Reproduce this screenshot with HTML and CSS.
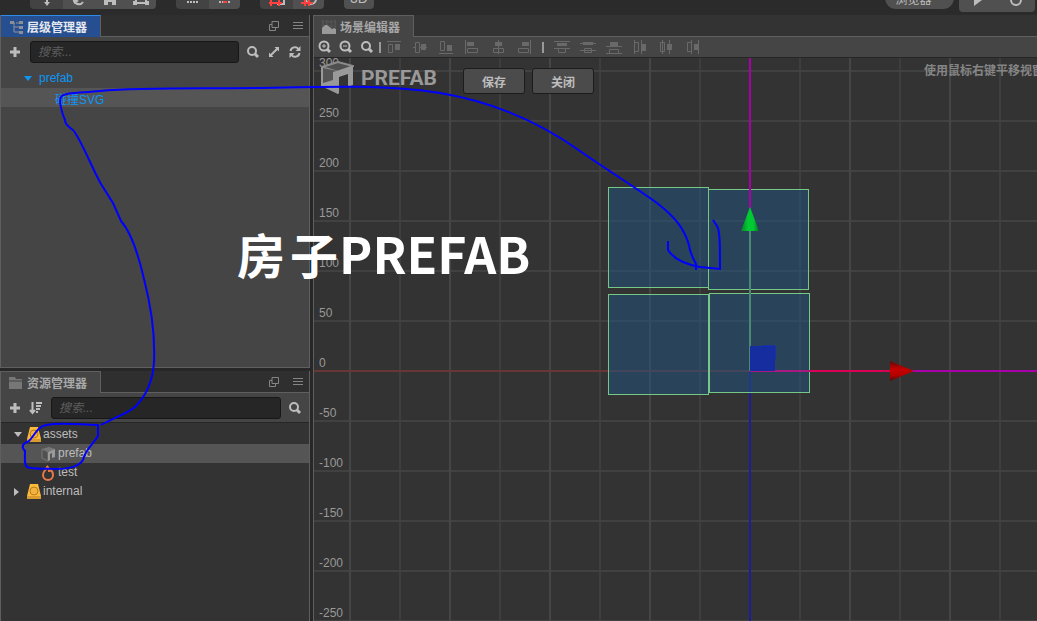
FILE: index.html
```html
<!DOCTYPE html>
<html lang="zh-CN">
<head>
    <meta charset="UTF-8">
    <meta name="viewport" content="width=device-width, initial-scale=1.0">
    <title>房子PREFAB</title>
    <link rel="stylesheet" href="styles.css">
</head>
<body>

<header class="toolbar">
    <div class="group">
        <button class="tool dark" aria-label="移动"><svg width="16" height="16"><path d="M8 2v12" class="ico"/><path d="M5 12h6l-3 4z" class="fill"/></svg></button>
        <button class="tool" aria-label="旋转"><svg width="16" height="16"><path d="M3 8a5 5 0 0 0 9 4M13 8a5 5 0 0 0-9-4" class="ico"/><path d="M3 8v6l5-3z" class="fill"/></svg></button>
        <button class="tool" aria-label="缩放"><svg width="16" height="16"><path d="M4 15V5M12 15V5" class="ico wide"/><path d="M4 11h8" class="ico"/></svg></button>
        <button class="tool" aria-label="矩形"><svg width="18" height="16"><path d="M4 4v8M14 4v8M4 13h10" class="ico"/><path d="M1 11h4v4H1zM13 11h4v4h-4z" class="fill"/></svg></button>
    </div>
    <div class="group">
        <button class="tool dark" aria-label="锚点"><svg width="14" height="16"><path d="M1 12h12" class="ico dash"/></svg></button>
        <button class="tool" aria-label="中心"><svg width="14" height="16"><path d="M1 12h12" class="ico dash"/><path d="M5 12h4" class="ico red"/></svg></button>
    </div>
    <div class="group">
        <button class="tool dark" aria-label="本地"><svg width="18" height="16"><path d="M9 14h7V3" class="ico"/><path d="M3 4v12M11 4v12M1 13h13" class="ico red"/></svg></button>
        <button class="tool" aria-label="世界"><svg width="18" height="16"><circle cx="11" cy="9" r="5" class="ico"/><path d="M5 4v12M9 4v12M1 13h12" class="ico red"/></svg></button>
    </div>
    <button class="tool single">3D</button>
    <div class="preview">
        <button class="tool pill">浏览器<span class="caret">▼</span></button>
        <div class="group play">
            <button class="tool" aria-label="运行"><svg width="16" height="16"><path d="M4 2l8 5-8 6z" class="fill"/></svg></button>
            <button class="tool" aria-label="刷新"><svg width="16" height="16"><circle cx="8" cy="7" r="5" class="ico"/></svg></button>
        </div>
    </div>
</header>

<main class="workspace">
    <aside class="sidebar">
        <section class="panel hierarchy">
            <div class="tabs">
                <h2 class="tab active">
                    <svg width="14" height="16"><path d="M2 4h3M4 4v9h5M4 8h5M6 4h5" fill="none" stroke="#8b8f95"/><path d="M0 2h4v3H0zM9 2h4v3H9zM9 7h4v3H9zM9 12h4v3H9z" fill="#8b8f95"/></svg>
                    层级管理器
                </h2>
                <div class="tab-tools">
                    <button aria-label="弹出"><svg width="12" height="12"><path d="M4 1.5h6.500v6H4zM4 4.500H1.500v6h6v-3" class="thin"/></svg></button>
                    <button aria-label="菜单"><svg width="12" height="12"><path d="M1 2.500h10M1 5.500h10M1 8.500h10" class="thin"/></svg></button>
                </div>
            </div>
            <div class="search-row">
                <button aria-label="新建节点"><svg width="12" height="12"><path d="M6 1v10M1 6h10" class="plus"/></svg></button>
                <input type="text" class="search" placeholder="搜索..." aria-label="搜索节点">
                <button aria-label="查找"><svg width="14" height="14"><circle cx="6" cy="6" r="4" class="ico"/><path d="M9 9l3 3" class="ico bold"/></svg></button>
                <button aria-label="展开"><svg width="14" height="14"><path d="M3 11l8-8" class="ico"/><path d="M7.500 2H12v4.500zM2 7.500V12h4.500z" class="fill"/></svg></button>
                <button aria-label="刷新节点"><svg width="14" height="14"><path d="M2.500 6a4.500 4.500 0 0 1 8-2M11.500 8a4.500 4.500 0 0 1-8 2" class="ico"/><path d="M12.500 1v5h-5zM1.500 13V8h5z" class="fill"/></svg></button>
            </div>
            <ul class="tree blue">
                <li><span class="arrow"></span>prefab</li>
                <li class="selected child">碰撞SVG</li>
            </ul>
        </section>

        <section class="panel assets">
            <div class="tabs">
                <h2 class="tab">
                    <svg width="16" height="16"><path d="M1 2h6l1 2h6v10H1z" fill="#777"/><path d="M1 6h13" stroke="#444"/></svg>
                    资源管理器
                </h2>
                <div class="tab-tools">
                    <button aria-label="弹出"><svg width="12" height="12"><path d="M4 1.500h6.500v6H4zM4 4.500H1.500v6h6v-3" class="thin"/></svg></button>
                    <button aria-label="菜单"><svg width="12" height="12"><path d="M1 2.500h10M1 5.500h10M1 8.500h10" class="thin"/></svg></button>
                </div>
            </div>
            <div class="search-row">
                <button aria-label="新建资源"><svg width="12" height="12"><path d="M6 1v10M1 6h10" class="plus"/></svg></button>
                <button aria-label="排序"><svg width="16" height="14"><path d="M4.500 1v11M2 9l2.500 3L7 9M8 2h6M8 5h5M8 8h4M8 11h2" class="ico"/></svg></button>
                <input type="text" class="search" placeholder="搜索..." aria-label="搜索资源">
                <button aria-label="查找资源"><svg width="14" height="14"><circle cx="6" cy="6" r="4" class="ico"/><path d="M9 9l3 3" class="ico bold"/></svg></button>
            </div>
            <ul class="tree">
                <li><span class="arrow"></span><svg width="14" height="17"><path d="M3 1h8l3 12H0z" fill="#fdb93a"/><path d="M0 13h14v3H0z" fill="#d99b30"/><circle cx="7" cy="8" r="4" fill="#f4b040" stroke="#b57d1c"/></svg>assets</li>
                <li class="selected leaf"><svg width="15" height="16"><path d="M1 3l7-2 6 2-5 3z" fill="#777"/><path d="M1 3l6 3v9l-6-3z" fill="#505050" stroke="#777"/><path d="M7 6l7-3v8l-3 1V7L9 8v6l-2 1z" fill="#9a9a9a"/></svg>prefab</li>
                <li class="leaf"><svg width="15" height="17"><path d="M6 2c1 3-4 4-4 9a5 5 0 0 0 10 0c0-2-1-4-2-5-1 1-2 1-2 1C8 5 7 3 6 2z" fill="none" stroke="#e8794a" stroke-width="2"/></svg>test</li>
                <li><span class="arrow closed"></span><svg width="14" height="17"><path d="M3 1h8l3 12H0z" fill="#fdb93a"/><path d="M0 13h14v3H0z" fill="#d99b30"/><circle cx="7" cy="8" r="4" fill="#f4b040" stroke="#b57d1c"/></svg>internal</li>
            </ul>
        </section>
    </aside>

    <section class="panel scene">
        <div class="tabs">
            <h2 class="tab">
                <svg width="16" height="16"><path d="M1 3h14M1 7h14M2 1v8M6 1v8M10 1v8M14 1v8" stroke="#5c5c5c" stroke-dasharray="2 1"/><path d="M1 9l3-3h2l5 4 2-1 2 1v5H1z" fill="#9a9a9a"/></svg>
                场景编辑器
            </h2>
        </div>
        <div class="align-row">
            <div class="zooms">
                <button aria-label="放大"><svg width="14" height="14"><circle cx="6" cy="6" r="4.500" class="ico"/><path d="M9 9l3 3" class="ico bold"/><path d="M4 6h4M6 4v4" stroke="#bdbdbd"/></svg></button>
                <button aria-label="缩小"><svg width="14" height="14"><circle cx="6" cy="6" r="4.500" class="ico"/><path d="M9 9l3 3" class="ico bold"/><path d="M4 6h4" stroke="#bdbdbd"/></svg></button>
                <button aria-label="适应"><svg width="14" height="14"><circle cx="6" cy="6" r="4" class="ico"/><path d="M9 9l3 3" class="ico bold"/></svg></button>
            </div>
            <span class="bar"></span>
            <div class="aligns">
                <button aria-label="顶部对齐"><svg width="16" height="16"><path d="M1 2.500h14M2.500 5.500h4v8h-4z" class="dim"/><path d="M9 5h5v6H9z" class="dimfill"/></svg></button>
                <button aria-label="垂直居中"><svg width="16" height="16"><path d="M1 8.500h2M8 8.500h7M3.500 3.500h4v10h-4z" class="dim"/><path d="M9 5h5v6H9z" class="dimfill"/></svg></button>
                <button aria-label="底部对齐"><svg width="16" height="16"><path d="M1 14.500h14M2.500 2.500h4v9h-4z" class="dim"/><path d="M9 6h5v6H9z" class="dimfill"/></svg></button>
                <button aria-label="左对齐"><svg width="16" height="16"><path d="M1.500 1v14M3.500 9.500h10v4h-10z" class="dim"/><path d="M3 3h7v4H3z" class="dimfill"/></svg></button>
                <button aria-label="水平居中"><svg width="16" height="16"><path d="M8.500 1v14M3.500 9.500h10v4h-10z" class="dim"/><path d="M5 3h7v4H5z" class="dimfill"/></svg></button>
                <button aria-label="右对齐"><svg width="16" height="16"><path d="M14.500 1v14M2.500 9.500h10v4h-10z" class="dim"/><path d="M6 3h7v4H6z" class="dimfill"/></svg></button>
            </div>
            <span class="bar split"></span>
            <div class="aligns">
                <button aria-label="顶部分布"><svg width="16" height="16"><path d="M0 2.500h16M0 9.500h16M4.500 9.500h7v4h-7z" class="dim"/><path d="M3 4h10v3H3z" class="dimfill"/></svg></button>
                <button aria-label="垂直分布"><svg width="16" height="16"><path d="M0 4.500h16M0 11.500h16M4.500 9.500h7v4h-7z" class="dim"/><path d="M3 3h10v3H3z" class="dimfill"/></svg></button>
                <button aria-label="底部分布"><svg width="16" height="16"><path d="M0 7.500h16M0 14.500h16M3.500 10.500h9v4h-9z" class="dim"/><path d="M4 3h8v4H4z" class="dimfill"/></svg></button>
                <button aria-label="左侧分布"><svg width="16" height="16"><path d="M2.500 1v14M9.500 1v14M2.500 3.500h4v9h-4z" class="dim"/><path d="M10 5h4v7h-4z" class="dimfill"/></svg></button>
                <button aria-label="水平分布"><svg width="16" height="16"><path d="M4.500 1v14M11.500 1v14M2.500 3.500h4v9h-4z" class="dim"/><path d="M9 5h5v6H9z" class="dimfill"/></svg></button>
                <button aria-label="右侧分布"><svg width="16" height="16"><path d="M7.500 1v14M14.500 1v14M3.500 3.500h4v9h-4z" class="dim"/><path d="M10 5h4v6h-4z" class="dimfill"/></svg></button>
            </div>
        </div>
        <div class="viewport">
            <svg class="canvas">
                <defs>
                    <pattern id="grid" x="35" y="12" width="100" height="50" patternUnits="userSpaceOnUse">
                        <path d="M51 0v50" stroke="#3e3e3e" stroke-width="2"/>
                        <path d="M0 1h100" stroke="#414141" stroke-width="2"/>
                        <path d="M1 0v50" stroke="#464646" stroke-width="2"/>
                    </pattern>
                    <linearGradient id="cone-y">
                        <stop offset="0" stop-color="#0b8127"/><stop offset=".4" stop-color="#00cc33"/><stop offset=".7" stop-color="#00c832"/><stop offset="1" stop-color="#0b6f25"/>
                    </linearGradient>
                    <linearGradient id="cone-x" x2="0" y2="1">
                        <stop offset="0" stop-color="#5c0c0c"/><stop offset=".4" stop-color="#c40000"/><stop offset=".7" stop-color="#b80000"/><stop offset="1" stop-color="#500c0c"/>
                    </linearGradient>
                </defs>
                <rect width="100%" height="100%" fill="url(#grid)"/>
                <!-- everything below is relative to the scene origin -->
                <g transform="translate(436 313)" fill="none" stroke-width="2">
                    <path d="M-436 0H0" stroke="#693636"/>
                    <path d="M0 0H2000" stroke="#aa00aa"/>
                    <path d="M0 0V2000" stroke="#1e1e9c"/>
                    <g fill="#1d5382" fill-opacity=".5" stroke="#76c887" stroke-width="1">
                        <rect x="-141.500" y="-183.500" width="100" height="100"/>
                        <rect x="-41.500" y="-181.500" width="100" height="100"/>
                        <rect x="-141.500" y="-76.500" width="100" height="100"/>
                        <rect x="-40.500" y="-77.500" width="100" height="99"/>
                    </g>
                    <path d="M0-140V0" stroke="#4b8975"/>
                    <path d="M0-313V-163" stroke="#aa00aa"/>
                    <path d="M0 0H60" stroke="#a91a80"/>
                    <path d="M60 0H140" stroke="#d90055"/>
                    <path d="M0-25H25V0H0z" fill="#152d9e"/>
                    <path d="M12-25H25V-12" stroke="#1028c8" stroke-width="1"/>
                    <path d="M0-164L9-140H-9z" fill="url(#cone-y)"/>
                    <path d="M164 0L140-10V10z" fill="url(#cone-x)"/>
                </g>
            </svg>
            <ol class="ruler">
                <li>300</li>
                <li>250</li>
                <li>200</li>
                <li>150</li>
                <li>100</li>
                <li>50</li>
                <li>0</li>
                <li>-50</li>
                <li>-100</li>
                <li>-150</li>
                <li>-200</li>
                <li>-250</li>
            </ol>
            <div class="prefab-bar">
                <svg width="33" height="33"><path d="M1 6L17 1l15 4-15 6z" fill="#4f4f4f" stroke="#8a8a8a" stroke-width="2"/><path d="M1 7l16 3-5 10-11 3z" fill="#555"/><path d="M0 6l2 1v15l10-3v8l5 2v4L0 25z" fill="#999"/><path d="M12 11L32 5v19l-5 2V13l-9 3v16l-1 1-5-3z" fill="#999"/></svg>
                <strong class="prefab-name">PREFAB</strong>
                <button class="action">保存</button>
                <button class="action">关闭</button>
            </div>
            <p class="hint">使用鼠标右键平移视窗焦点，使用滚轮缩放视图</p>
        </div>
    </section>
</main>

<!-- hand drawn notes over the editor -->
<svg class="notes" aria-hidden="true">
    <path d="M74 131C68 126 65 124 65 120C61 111 59 101 61 97C65 92 80 93 100 91C145 87 205 89 260 88C340 86 390 85 440 93C500 103 545 126 580 151C610 172 635 187 657 203C675 217 684 228 689 245C690 254 694 260 696 264V270"/>
    <path d="M74 131C84 146 91 166 101 184L113 203L121 221C131 232 138 253 144 279C152 310 155 340 154 362C153 379 147 395 135 407C125 415 113 418 101 425"/>
    <path d="M668 241V250C673 258 684 264 700 267L720 269C720 244 720 231 717 226L713 220"/>
    <path d="M25 451C21 447 22 444 29 441C35 435 37 427 46 425C61 422 82 425 98 425V436C94 443 85 450 83 460C79 466 69 469 57 469C46 468 35 470 27 467C24 464 25 460 25 451z"/>
</svg>
<p class="caption"><span>房</span><span>子</span><span class="latin">PREFAB</span></p>

</body>
</html>
```

FILE: styles.css
```css
* {
    box-sizing: border-box;
}
body {
    margin: 0;
    height: 100vh;
    display: flex;
    flex-direction: column;
    overflow: hidden;
    background-color: #272727;
    color: #bdbdbd;
    font-family: "Liberation Sans", "Noto Sans CJK SC", sans-serif;
    font-size: 12px;
}
button {
    display: flex;
    align-items: center;
    justify-content: center;
    padding: 0;
    border: none;
    background: none;
    color: inherit;
    font: inherit;
    cursor: pointer;
}
h2, p, ul, ol {
    margin: 0;
    padding: 0;
    list-style: none;
}
svg {
    flex: none;
}
.ico {
    fill: none;
    stroke: #bdbdbd;
    stroke-width: 2;
}
.bold {
    stroke-width: 3;
}
.wide {
    stroke-width: 4;
}
.dash {
    stroke-dasharray: 2 1;
}
.red {
    stroke: #ff4040;
}
.fill {
    fill: #bdbdbd;
}
.thin {
    fill: none;
    stroke: #858585;
}
.plus {
    stroke: #bdbdbd;
    stroke-width: 3;
}
.dim {
    fill: none;
    stroke: #696969;
}
.dimfill {
    fill: #696969;
}

/* top toolbar */
.toolbar {
    flex: none;
    height: 15px;
    display: flex;
    align-items: flex-end;
    gap: 20px;
    padding: 0 2px 6px 30px;
    overflow: hidden;
    background-color: #2b2b2b;
}
.group {
    display: flex;
    flex: none;
    border-radius: 4px;
    overflow: hidden;
}
.tool {
    flex: none;
    width: 31px;
    height: 22px;
    background-color: #505050;
}
.tool.dark {
    width: 33px;
    background-color: #434343;
}
.tool.single {
    width: 30px;
    border-radius: 4px;
    font-size: 14px;
}
.preview {
    display: flex;
    align-items: flex-end;
    gap: 5px;
    margin-left: auto;
}
.tool.pill {
    width: 69px;
    gap: 6px;
    border-radius: 11px;
}
.caret {
    font-size: 6px;
}
.play {
    margin-bottom: -3px;
}
.play .tool {
    width: 38px;
}

/* panels */
.workspace {
    flex: 1;
    min-height: 0;
    display: flex;
    gap: 3px;
}
.sidebar {
    flex: none;
    width: 310px;
    display: flex;
    flex-direction: column;
    gap: 3px;
}
.panel {
    display: flex;
    flex-direction: column;
    min-width: 0;
    border-left: 1px solid #5f5f5f;
}
.sidebar .panel {
    border-right: 1px solid #5f5f5f;
}
.hierarchy {
    flex: 1;
    background-color: #454545;
    border-bottom: 1px solid #5f5f5f;
}
.assets {
    height: 250px;
    background-color: #333;
}
.scene {
    flex: 1;
    background-color: #333;
}
.tabs {
    flex: none;
    height: 22px;
    display: flex;
    justify-content: space-between;
    background-color: #2f2f2f;
    border-bottom: 1px solid #5f5f5f;
}
.scene .tabs {
    background-color: #333;
}
.tab {
    display: flex;
    align-items: center;
    gap: 3px;
    height: 22px;
    width: 100px;
    padding-left: 7px;
    border-top: 1px solid #5f5f5f;
    border-right: 1px solid #5f5f5f;
    background-color: #454545;
    color: #a8a8a8;
    font-size: 12px;
    font-weight: bold;
    white-space: nowrap;
}
.tab.active {
    padding-left: 9px;
    border-top-color: #2f8bea;
    background-color: #264f91;
    color: #e4e8f0;
}
.tab-tools {
    display: flex;
    gap: 12px;
    padding-right: 5px;
}
.search-row {
    flex: none;
    height: 30px;
    display: flex;
    align-items: center;
    gap: 7px;
    padding: 0 7px 0 8px;
    background-color: #454545;
}
.assets .search-row {
    border-bottom: 1px solid #262626;
}
.search {
    flex: 1;
    min-width: 0;
    height: 22px;
    margin: 0 0 0 2px;
    padding: 0 7px;
    border: 1px solid #171717;
    border-radius: 3px;
    background-color: #262626;
    color: #bdbdbd;
    font: italic 12px "Liberation Sans", "Noto Sans CJK SC", sans-serif;
}
.assets .search {
    margin-left: 0;
}
.search::placeholder {
    color: #5e5e5e;
}

/* trees */
.tree {
    padding-top: 2px;
}
.tree li {
    display: flex;
    align-items: center;
    height: 19px;
    padding-left: 13px;
    gap: 2px;
    line-height: 19px;
}
.tree.blue {
    padding-top: 1px;
    color: #0d96f5;
}
.tree.blue li {
    height: 20px;
    padding-left: 22px;
    gap: 6px;
}
.tree .selected {
    background-color: #555;
}
.tree.blue .child {
    height: 19px;
    padding-top: 5px;
    padding-left: 54px;
}
.tree .leaf {
    padding-left: 40px;
}
.arrow {
    width: 8px;
    margin-right: 3px;
    border: 4px solid transparent;
    border-top: 5px solid currentColor;
    border-bottom: 0;
}
.blue .arrow {
    margin: 0 1px;
}
.arrow.closed {
    border: 4px solid transparent;
    border-left: 5px solid currentColor;
    border-right: 0;
}

/* scene */
.align-row {
    flex: none;
    height: 21px;
    display: flex;
    align-items: center;
    gap: 5px;
    padding-left: 4px;
    background-color: #454545;
    border-bottom: 1px solid #262626;
}
.zooms {
    display: flex;
    gap: 7px;
}
.bar {
    width: 2px;
    height: 11px;
    background-color: #999;
}
.bar.split {
    margin: 0 5px;
}
.aligns {
    display: flex;
    gap: 10px;
}
.viewport {
    flex: 1;
    min-height: 0;
    position: relative;
    overflow: hidden;
}
.canvas {
    position: absolute;
    left: 0;
    top: 0;
    width: 100%;
    height: 100%;
}
.ruler {
    position: absolute;
    left: 5px;
    top: -2px;
    color: #999;
}
.ruler li {
    height: 50px;
    line-height: 14px;
}
.prefab-bar {
    position: absolute;
    left: 7px;
    top: 3px;
    display: flex;
    align-items: flex-end;
    gap: 7px;
}
.prefab-name {
    align-self: center;
    width: 95px;
    color: #999;
    font-family: Roboto, sans-serif;
    font-size: 21px;
}
.action {
    width: 62px;
    height: 26px;
    border: 1px solid #1c1c1c;
    border-radius: 3px;
    background-color: #4b4b4b;
    font-weight: bold;
}
.hint {
    position: absolute;
    left: 610px;
    top: 3px;
    color: #858585;
    font-weight: bold;
    white-space: nowrap;
}

/* notes */
.notes {
    position: absolute;
    left: 0;
    top: 0;
    width: 100%;
    height: 100%;
    fill: none;
    stroke: #0000ff;
    stroke-width: 2;
    pointer-events: none;
}
.caption {
    position: absolute;
    left: 237px;
    top: 214px;
    display: flex;
    align-items: baseline;
    gap: 5px;
    color: #fff;
    font-family: "Noto Sans CJK SC", sans-serif;
    font-size: 48px;
    font-weight: bold;
    line-height: 76px;
    pointer-events: none;
}
.caption .latin {
    margin-left: -4px;
    font-size: 50px;
}
```
